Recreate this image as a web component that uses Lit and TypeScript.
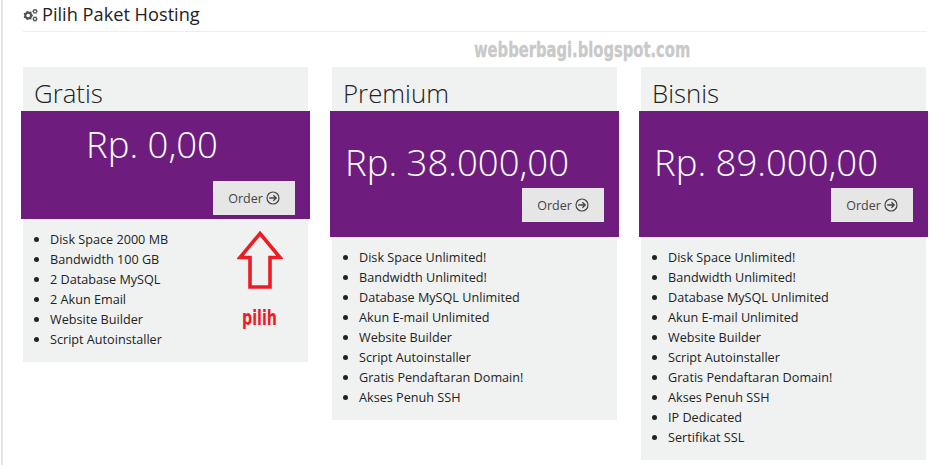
import { LitElement, html, css, svg } from "lit";
import { customElement } from "lit/decorators.js";

interface Plan { name: string; price: string; free?: boolean; items: string[]; }

const plans: Plan[] = [
  { name: "Gratis", price: "Rp. 0,00", free: true, items: ["Disk Space 2000 MB", "Bandwidth 100 GB", "2 Database MySQL", "2 Akun Email", "Website Builder", "Script Autoinstaller"] },
  { name: "Premium", price: "Rp. 38.000,00", items: ["Disk Space Unlimited!", "Bandwidth Unlimited!", "Database MySQL Unlimited", "Akun E-mail Unlimited", "Website Builder", "Script Autoinstaller", "Gratis Pendaftaran Domain!", "Akses Penuh SSH"] },
  { name: "Bisnis", price: "Rp. 89.000,00", items: ["Disk Space Unlimited!", "Bandwidth Unlimited!", "Database MySQL Unlimited", "Akun E-mail Unlimited", "Website Builder", "Script Autoinstaller", "Gratis Pendaftaran Domain!", "Akses Penuh SSH", "IP Dedicated", "Sertifikat SSL"] },
];

const gear = (cx: number, cy: number, r: number, teeth: number) => {
  const pts: string[] = [];
  for (let i = 0; i < teeth * 2; i++) {
    const a = (i * Math.PI) / teeth;
    const rr = i % 2 ? r * 0.78 : r;
    pts.push(`${(cx + rr * Math.cos(a)).toFixed(2)},${(cy + rr * Math.sin(a)).toFixed(2)}`);
  }
  return svg`<polygon points=${pts.join(" ")} fill="#555"></polygon><circle cx=${cx} cy=${cy} r=${r * 0.36} fill="#fff"></circle>`;
};

@customElement("app-root")
export class AppRoot extends LitElement {
  static styles = css`
    :host { display: block; position: relative; width: 930px; height: 465px; overflow: hidden; background: #fff; font-family: "Open Sans", sans-serif; color: #222; box-sizing: border-box; padding-left: 23px; padding-right: 3px; }
    .rule { position: absolute; left: 1px; top: 0; bottom: 0; width: 2px; background: #e6e6e6; }
    .head { display: flex; align-items: center; gap: 4px; border-bottom: 1px solid #eee; font-size: 18.2px; color: #222; padding-bottom: 3px; box-sizing: border-box; height: 32px; }
    .head svg { width: 15px; height: 14px; flex: none; margin-top: 1px; }
    .cards { display: flex; align-items: flex-start; gap: 24px; margin-top: 35px; }
    .card { width: 285px; background: #f0f2f2; box-sizing: border-box; padding-bottom: 13px; }
    h2 { margin: 0; height: 44px; padding: 8px 0 0 11px; box-sizing: border-box; font-weight: 300; font-size: 25.8px; line-height: 36px; color: #222; }
    .band { margin: 0 -2px; background: #6e1d7e; height: 126px; box-sizing: border-box; padding: 27px 15px 0; display: flex; flex-direction: column; }
    .band.free { height: 108px; padding-top: 9px; }
    .price { font-weight: 300; font-size: 36.5px; line-height: 48px; color: #fff; white-space: nowrap; }
    .free .price { text-align: center; padding-right: 27px; }
    .order { align-self: flex-end; width: 82px; height: 34px; margin-top: 2px; background: #e6e6e6; padding: 0; display: flex; align-items: center; justify-content: center; gap: 3px; font-weight: 400; font-size: 12.5px; color: #444; }
    .free .order { margin-top: 13px; }
    .order svg { width: 14px; height: 14px; flex: none; }
    ul { margin: 0; padding: 10px 0 0 27px; list-style: disc; }
    li { font-size: 12.65px; line-height: 20px; color: #222; }
    .mark { position: absolute; left: 474px; top: 36px; font: bold 21px/28px "DejaVu Sans Condensed", "Liberation Sans Narrow", sans-serif; color: #c9c9c9; -webkit-text-stroke: 0.3px #c9c9c9; white-space: nowrap; transform-origin: left center; transform: scaleX(0.78); }
    .arrow { position: absolute; left: 237px; top: 230px; width: 46px; height: 60px; }
    .pilih { position: absolute; left: 242px; top: 304px; font: bold 22px/28px "DejaVu Sans Condensed", sans-serif; color: #ed1c24; transform-origin: left center; transform: scaleX(0.72); }
  `;

  private orderIcon() {
    return html`<svg viewBox="0 0 14 14" fill="none" stroke="#444" stroke-width="1.2"><circle cx="7" cy="7" r="6"></circle><path d="M3.2 7h7M7.4 4.2 10.2 7 7.4 9.8" stroke-width="1.3"></path></svg>`;
  }

  render() {
    return html`
      <div class="rule"></div>
      <div class="head">
        <svg viewBox="0 0 15 14">${gear(5.2, 7.5, 5, 7)}${gear(12, 3.4, 2.8, 6)}${gear(12, 11, 2.8, 6)}</svg>
        <span>Pilih Paket Hosting</span>
      </div>
      <div class="cards">
        ${plans.map((p) => html`
          <section class="card">
            <h2>${p.name}</h2>
            <div class="band ${p.free ? "free" : ""}">
              <div class="price">${p.price}</div>
              <div class="order">Order ${this.orderIcon()}</div>
            </div>
            <ul>${p.items.map((i) => html`<li>${i}</li>`)}</ul>
          </section>`)}
      </div>
      <div class="mark">webberbagi.blogspot.com</div>
      <svg class="arrow" viewBox="0 0 46 60"><path d="M23 3.5 43 27.5H33V57H13V27.5H3Z" fill="none" stroke="#ed1c24" stroke-width="3.6" stroke-linejoin="miter"></path></svg>
      <div class="pilih">pilih</div>
    `;
  }
}
